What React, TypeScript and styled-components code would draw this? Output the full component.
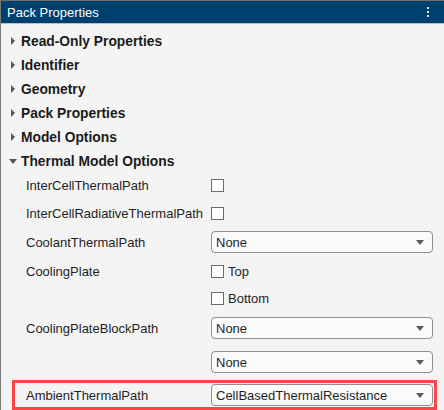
import React from "react";
import styled, { createGlobalStyle } from "styled-components";

const Global = createGlobalStyle`
  html, body {
    margin: 0;
    padding: 0;
    background: #f4f4f4;
  }
  body {
    font-family: "Liberation Sans", Arial, sans-serif;
  }
`;

const Panel = styled("div")`
  width: 444px;
  height: 410px;
  overflow: hidden;
  background: #f4f4f4;
  border-left: 1px solid #7a7a7a;
  box-sizing: border-box;
`;

const Header = styled("div")`
  height: 24px;
  box-sizing: border-box;
  border-top: 1px solid #6f6f6f;
  border-bottom: 1px solid #b4c2d0;
  background: #00406f;
  display: flex;
  align-items: center;
  justify-content: space-between;
  padding: 0 15px 0 6px;
  color: #ffffff;
  font-size: 13px;
`;

const Dots = styled("div")`
  display: flex;
  flex-direction: column;
  gap: 2px;
  span {
    width: 2px;
    height: 2px;
    background: #dce6f0;
  }
`;

const Body = styled("div")`
  padding-top: 5px;
`;

const Section = styled("div")`
  height: 24px;
  display: flex;
  align-items: center;
  padding-left: 7px;
  font-size: 13.8px;
  font-weight: bold;
  color: #1b1b1b;
`;

const Caret = styled("span")<{ open?: boolean }>`
  width: 10px;
  display: inline-flex;
  justify-content: center;
  margin-right: 3px;
  &::before {
    content: "";
    border-style: solid;
    border-color: transparent;
    ${(p) =>
      p.open
        ? "border-width: 5px 4px 0 4px; border-top-color: #555;"
        : "border-width: 4px 0 4px 4px; border-left-color: #555;"}
  }
`;

const Props = styled("div")`
  display: flex;
  flex-direction: column;
`;

const Row = styled("div")<{ top: number; hl?: boolean }>`
  height: 22px;
  margin-top: ${(p) => p.top}px;
  margin-left: 15px;
  width: 417px;
  display: flex;
  align-items: center;
  font-size: 13px;
  color: #1f1f1f;
  ${(p) => (p.hl ? "outline: 3px solid #fb4549; outline-offset: 1px;" : "")}
`;

const Label = styled("div")`
  width: 195px;
  padding-left: 10px;
  box-sizing: border-box;
`;

const Check = styled("span")`
  width: 13px;
  height: 13px;
  box-sizing: border-box;
  border: 1px solid #6b6b6b;
  background: #ffffff;
  margin-right: 4px;
`;

const Select = styled("div")`
  flex: 1;
  height: 22px;
  box-sizing: border-box;
  border: 1px solid #8e8e8e;
  border-radius: 4px;
  background: #fafafa;
  display: flex;
  align-items: center;
  justify-content: space-between;
  padding: 0 8px 0 4px;
  &::after {
    content: "";
    border-style: solid;
    border-color: #5a5a5a transparent transparent transparent;
    border-width: 5px 4px 0 4px;
  }
`;

const sections = [
  "Read-Only Properties",
  "Identifier",
  "Geometry",
  "Pack Properties",
  "Model Options",
];

export default function App() {
  return (
    <>
      <Global />
      <Panel>
        <Header>
          <span>Pack Properties</span>
          <Dots>
            <span />
            <span />
            <span />
          </Dots>
        </Header>
        <Body>
          {sections.map((s) => (
            <Section key={s}>
              <Caret />
              {s}
            </Section>
          ))}
          <Section>
            <Caret open />
            Thermal Model Options
          </Section>
          <Props>
            <Row top={1}>
              <Label>InterCellThermalPath</Label>
              <Check />
            </Row>
            <Row top={6}>
              <Label>InterCellRadiativeThermalPath</Label>
              <Check />
            </Row>
            <Row top={7}>
              <Label>CoolantThermalPath</Label>
              <Select>None</Select>
            </Row>
            <Row top={7}>
              <Label>CoolingPlate</Label>
              <Check />
              Top
            </Row>
            <Row top={5}>
              <Label />
              <Check />
              Bottom
            </Row>
            <Row top={8}>
              <Label>CoolingPlateBlockPath</Label>
              <Select>None</Select>
            </Row>
            <Row top={12}>
              <Label />
              <Select>None</Select>
            </Row>
            <Row top={11} hl>
              <Label>AmbientThermalPath</Label>
              <Select>CellBasedThermalResistance</Select>
            </Row>
          </Props>
        </Body>
      </Panel>
    </>
  );
}
